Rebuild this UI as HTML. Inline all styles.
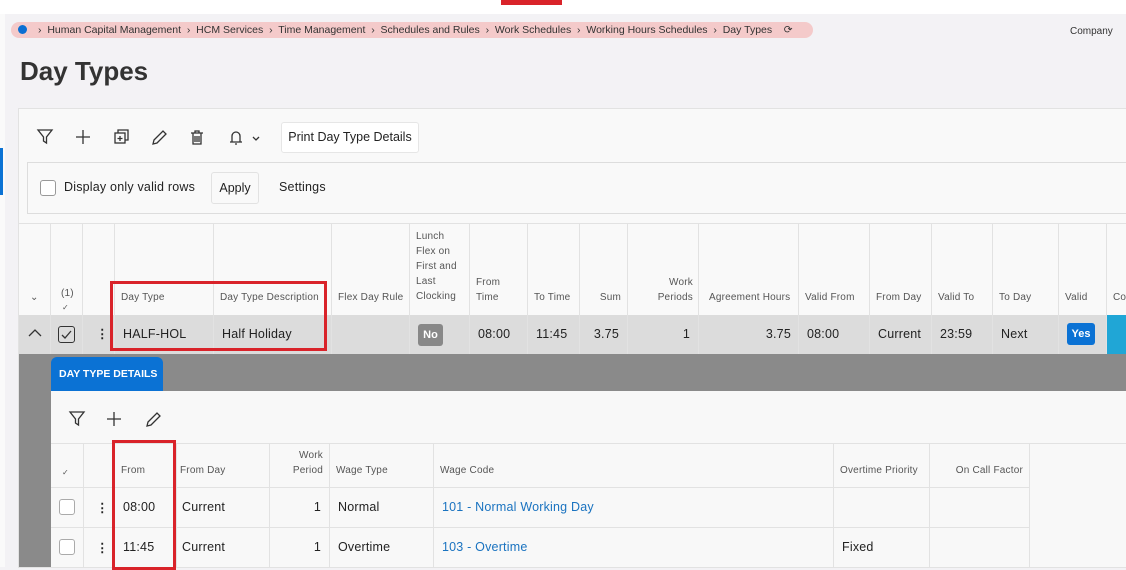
<!DOCTYPE html>
<html><head><meta charset="utf-8"><style>
*{margin:0;padding:0;box-sizing:border-box}
body{width:1126px;height:567px;overflow:hidden;background:#f3f2f5;font-family:"Liberation Sans",sans-serif;color:#222;position:relative}
.a{position:absolute}
.hd{position:absolute;font-size:10px;color:#555;line-height:15px;letter-spacing:0.2px}
.td{position:absolute;font-size:12.5px;color:#222;letter-spacing:0.2px}
.vl{position:absolute;width:1px;background:#e2e2e2}
.hl{position:absolute;height:1px;background:#e2e2e2}
.rb{position:absolute;border:3px solid #d9232a}
svg{position:absolute}
</style></head><body>
<div class="a" style="left:0;top:0;width:1126px;height:14px;background:#fff"></div>
<div class="a" style="left:501px;top:0;width:61px;height:5px;background:#d9232a"></div>
<div class="a" style="left:0;top:14px;width:5px;height:553px;background:#fafafa"></div>
<div class="a" style="left:0;top:148px;width:3px;height:47px;background:#0b72d4"></div>
<!-- breadcrumb -->
<div class="a" style="left:11px;top:22px;width:802px;height:16px;border-radius:8px;background:#f4caca"></div>
<div class="a" style="left:18px;top:25px;width:9px;height:9px;border-radius:50%;background:#0b6fd3"></div>
<div class="a" style="left:38px;top:23px;font-size:10.5px;letter-spacing:0px;color:#333;white-space:nowrap;line-height:14px">›&nbsp; Human Capital Management &nbsp;›&nbsp; HCM Services &nbsp;›&nbsp; Time Management &nbsp;›&nbsp; Schedules and Rules &nbsp;›&nbsp; Work Schedules &nbsp;›&nbsp; Working Hours Schedules &nbsp;›&nbsp; Day Types &nbsp;&nbsp; ⟳</div>
<div class="a" style="left:1070px;top:26px;font-size:10px;color:#333">Company</div>
<div class="a" style="left:20px;top:56px;font-size:26px;font-weight:bold;color:#333">Day Types</div>
<!-- card -->
<div class="a" style="left:18px;top:108px;width:1110px;height:460px;background:#f9f9f9;border:1px solid #e2e2e2"></div>
<svg style="left:36px;top:128px" width="240" height="18" fill="none" stroke="#333" stroke-width="1.3">
<path d="M2 2h14l-5.5 7v6l-3-2v-4z"/>
<path d="M47 2v14M40 9h14"/>
<rect x="79" y="5" width="10" height="10"/><path d="M82 5V2h10v10h-3M84 8v5M81.5 10.5h5" />
<path d="M117 16l1-4 9-9 3 3-9 9z"/>
<path d="M155 5h12M159 5V3h4v2M157 5v11h8V5M159 8v6M161 8v6M163 8v6"/>
<path d="M194 14h12M196 14V8a4 4 0 0 1 8 0v6M199 16h2M217 9l3 3 3-3"/>
</svg>
<div class="a" style="left:281px;top:122px;width:138px;height:31px;background:#fff;border:1px solid #e6e6e6;border-radius:3px;font-size:12.5px;line-height:29px;text-align:center">Print Day Type Details</div>
<div class="a" style="left:27px;top:162px;width:1100px;height:52px;border:1px solid #ddd;border-right:none"></div>
<div class="a" style="left:40px;top:180px;width:16px;height:16px;border:1px solid #999;border-radius:3px;background:#fff"></div>
<div class="a" style="left:64px;top:180px;font-size:12.5px;letter-spacing:0.2px">Display only valid rows</div>
<div class="a" style="left:211px;top:172px;width:48px;height:32px;border:1px solid #e2e2e2;border-radius:3px;font-size:12.5px;line-height:30px;text-align:center">Apply</div>
<div class="a" style="left:279px;top:180px;font-size:12.5px;letter-spacing:0.2px">Settings</div>
<!-- main table -->
<div class="hl" style="left:19px;top:223px;width:1107px"></div>
<div class="a" style="left:19px;top:315px;width:1107px;height:39px;background:#dcdcdc"></div>
<div class="a" style="left:1106px;top:315px;width:20px;height:39px;background:#20a6d6"></div>
<div class="vl" style="left:50px;top:223px;height:131px"></div>
<div class="vl" style="left:82px;top:223px;height:131px"></div>
<div class="vl" style="left:114px;top:223px;height:131px"></div>
<div class="vl" style="left:213px;top:223px;height:131px"></div>
<div class="vl" style="left:331px;top:223px;height:131px"></div>
<div class="vl" style="left:409px;top:223px;height:131px"></div>
<div class="vl" style="left:469px;top:223px;height:131px"></div>
<div class="vl" style="left:527px;top:223px;height:131px"></div>
<div class="vl" style="left:579px;top:223px;height:131px"></div>
<div class="vl" style="left:627px;top:223px;height:131px"></div>
<div class="vl" style="left:698px;top:223px;height:131px"></div>
<div class="vl" style="left:798px;top:223px;height:131px"></div>
<div class="vl" style="left:869px;top:223px;height:131px"></div>
<div class="vl" style="left:931px;top:223px;height:131px"></div>
<div class="vl" style="left:992px;top:223px;height:131px"></div>
<div class="vl" style="left:1058px;top:223px;height:131px"></div>
<div class="vl" style="left:1106px;top:223px;height:131px"></div>
<div class="hd" style="left:30px;top:290px">⌄</div>
<div class="hd" style="left:61px;top:286px">(1)</div>
<div class="hd" style="left:62px;top:300px;font-size:8px">✓</div>
<div class="hd" style="left:121px;top:290px">Day Type</div>
<div class="hd" style="left:220px;top:290px">Day Type Description</div>
<div class="hd" style="left:338px;top:290px">Flex Day Rule</div>
<div class="hd" style="left:416px;top:229px">Lunch<br>Flex on<br>First and<br>Last<br>Clocking</div>
<div class="hd" style="left:476px;top:275px">From<br>Time</div>
<div class="hd" style="left:534px;top:290px">To Time</div>
<div class="hd" style="left:579px;top:290px;width:42px;text-align:right">Sum</div>
<div class="hd" style="left:627px;top:275px;width:66px;text-align:right">Work<br>Periods</div>
<div class="hd" style="left:709px;top:290px">Agreement Hours</div>
<div class="hd" style="left:805px;top:290px">Valid From</div>
<div class="hd" style="left:876px;top:290px">From Day</div>
<div class="hd" style="left:938px;top:290px">Valid To</div>
<div class="hd" style="left:999px;top:290px">To Day</div>
<div class="hd" style="left:1065px;top:290px">Valid</div>
<div class="hd" style="left:1113px;top:290px">Co</div>
<svg style="left:28px;top:328px" width="14" height="10" fill="none" stroke="#333" stroke-width="1.3"><path d="M1 8l6-6 6 6"/></svg>
<div class="a" style="left:58px;top:326px;width:17px;height:17px;border:1.5px solid #333;border-radius:3px"></div>
<svg style="left:58px;top:326px" width="17" height="17" fill="none" stroke="#333" stroke-width="1.3"><path d="M4 9l3 3 6-7"/></svg>
<div class="td" style="left:96px;top:326px;font-weight:bold">⋮</div>
<div class="td" style="left:123px;top:327px">HALF-HOL</div>
<div class="td" style="left:222px;top:327px">Half Holiday</div>
<div class="a" style="left:418px;top:324px;width:25px;height:22px;border-radius:3px;background:#888;color:#fff;font-size:11px;font-weight:bold;line-height:22px;text-align:center">No</div>
<div class="td" style="left:478px;top:327px">08:00</div>
<div class="td" style="left:536px;top:327px">11:45</div>
<div class="td" style="left:579px;top:327px;width:40px;text-align:right">3.75</div>
<div class="td" style="left:627px;top:327px;width:63px;text-align:right">1</div>
<div class="td" style="left:698px;top:327px;width:93px;text-align:right">3.75</div>
<div class="td" style="left:807px;top:327px">08:00</div>
<div class="td" style="left:878px;top:327px">Current</div>
<div class="td" style="left:940px;top:327px">23:59</div>
<div class="td" style="left:1001px;top:327px">Next</div>
<div class="a" style="left:1067px;top:323px;width:28px;height:22px;border-radius:3px;background:#0b72d4;color:#fff;font-size:11px;font-weight:bold;line-height:22px;text-align:center">Yes</div>
<!-- detail -->
<div class="a" style="left:19px;top:354px;width:1107px;height:213px;background:#8a8a8a"></div>
<div class="a" style="left:51px;top:357px;width:112px;height:34px;background:#0b72d4;border-radius:6px 6px 0 0;color:#fff;font-size:10.5px;font-weight:bold;line-height:34px;padding-left:8px">DAY TYPE DETAILS</div>
<div class="a" style="left:51px;top:391px;width:1075px;height:176px;background:#f8f8f8"></div>
<svg style="left:68px;top:410px" width="100" height="18" fill="none" stroke="#333" stroke-width="1.3">
<path d="M2 2h14l-5.5 7v6l-3-2v-4z"/><path d="M46 2v14M39 9h14"/><path d="M79 16l1-4 9-9 3 3-9 9z"/></svg>
<div class="hl" style="left:51px;top:443px;width:1075px"></div>
<div class="hl" style="left:51px;top:487px;width:978px"></div>
<div class="hl" style="left:51px;top:527px;width:978px"></div>
<div class="vl" style="left:83px;top:443px;height:124px"></div>
<div class="vl" style="left:114px;top:443px;height:124px"></div>
<div class="vl" style="left:176px;top:443px;height:124px"></div>
<div class="vl" style="left:269px;top:443px;height:124px"></div>
<div class="vl" style="left:329px;top:443px;height:124px"></div>
<div class="vl" style="left:433px;top:443px;height:124px"></div>
<div class="vl" style="left:833px;top:443px;height:124px"></div>
<div class="vl" style="left:929px;top:443px;height:124px"></div>
<div class="vl" style="left:1029px;top:443px;height:124px"></div>
<div class="hd" style="left:62px;top:465px;font-size:8px">✓</div>
<div class="hd" style="left:121px;top:463px">From</div>
<div class="hd" style="left:180px;top:463px">From Day</div>
<div class="hd" style="left:269px;top:448px;width:54px;text-align:right">Work<br>Period</div>
<div class="hd" style="left:336px;top:463px">Wage Type</div>
<div class="hd" style="left:440px;top:463px">Wage Code</div>
<div class="hd" style="left:840px;top:463px">Overtime Priority</div>
<div class="hd" style="left:929px;top:463px;width:94px;text-align:right">On Call Factor</div>
<div class="a" style="left:59px;top:499px;width:16px;height:16px;border:1px solid #aaa;border-radius:3px;background:#fff"></div>
<div class="a" style="left:59px;top:539px;width:16px;height:16px;border:1px solid #aaa;border-radius:3px;background:#fff"></div>
<div class="td" style="left:96px;top:500px;font-weight:bold">⋮</div>
<div class="td" style="left:96px;top:540px;font-weight:bold">⋮</div>
<div class="td" style="left:123px;top:500px">08:00</div>
<div class="td" style="left:123px;top:540px">11:45</div>
<div class="td" style="left:182px;top:500px">Current</div>
<div class="td" style="left:182px;top:540px">Current</div>
<div class="td" style="left:269px;top:500px;width:52px;text-align:right">1</div>
<div class="td" style="left:269px;top:540px;width:52px;text-align:right">1</div>
<div class="td" style="left:338px;top:500px">Normal</div>
<div class="td" style="left:338px;top:540px">Overtime</div>
<div class="td" style="left:442px;top:500px;color:#1a73c0">101 - Normal Working Day</div>
<div class="td" style="left:442px;top:540px;color:#1a73c0">103 - Overtime</div>
<div class="td" style="left:842px;top:540px">Fixed</div>
<!-- red boxes -->
<div class="rb" style="left:110px;top:281px;width:217px;height:70px"></div>
<div class="rb" style="left:112px;top:440px;width:64px;height:130px"></div>
</body></html>
